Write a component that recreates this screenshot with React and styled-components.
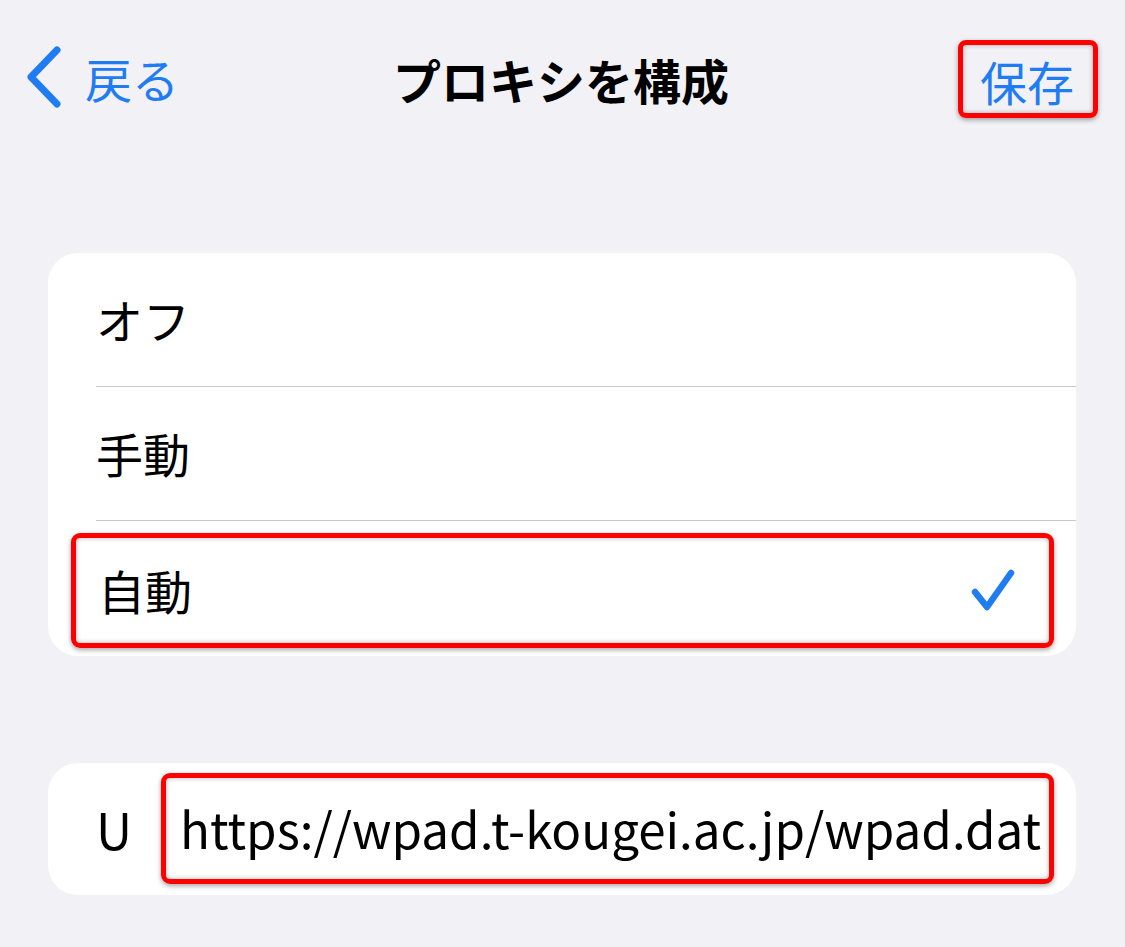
import React from 'react';
import styled, { createGlobalStyle } from 'styled-components';

const GlobalStyle = createGlobalStyle`
  body {
    margin: 0;
    background: #f2f1f6;
    font-family: "Noto Sans CJK JP", "Noto Sans", sans-serif;
    color: #000;
  }
`;

const BLUE = '#1f7cf3';

function App() {
  const options = [
    { label: 'オフ' },
    { label: '手動' },
    { label: '自動', checked: true },
  ];

  return (
    <Page>
      <GlobalStyle />
      <NavBar>
        <BackButton>
          <svg width="40" height="64" viewBox="0 0 40 64">
            <path d="M31 4 L5 31 L31 58" fill="none" stroke={BLUE} strokeWidth="7" strokeLinecap="round" strokeLinejoin="round" />
          </svg>
          <span>戻る</span>
        </BackButton>
        <Title>プロキシを構成</Title>
        <SaveSlot>
          <SaveButton>保存</SaveButton>
        </SaveSlot>
      </NavBar>

      <Card $top={134}>
        {options.map((o, i) => (
          o.checked ? (
            <Row key={i}>
              <Mark $row>
                <Label>{o.label}</Label>
                <svg width="46" height="44" viewBox="0 0 46 44">
                  <path d="M5 23 L17 38 L41 4" fill="none" stroke={BLUE} strokeWidth="6.5" strokeLinecap="round" strokeLinejoin="round" />
                </svg>
              </Mark>
            </Row>
          ) : (
            <Row key={i} $divider>
              <Label $pad>{o.label}</Label>
            </Row>
          )
        ))}
      </Card>

      <Card $top={107}>
        <UrlRow>
          <Label $pad $latin>U</Label>
          <Mark>
            <Url>https://wpad.t-kougei.ac.jp/wpad.dat</Url>
          </Mark>
        </UrlRow>
      </Card>
    </Page>
  );
}

export default App;

const Page = styled.div`
  width: 1125px;
  min-height: 947px;
  padding-bottom: 40px;
`;

const NavBar = styled.div`
  height: 84px;
  padding: 35px 27px 0 26px;
  display: grid;
  grid-template-columns: 1fr auto 1fr;
  align-items: center;
`;

const BackButton = styled.div`
  display: flex;
  align-items: center;
  gap: 19px;
  color: ${BLUE};
  font-size: 47px;
  svg { margin-top: 2px; }
`;

const Title = styled.div`
  font-size: 48px;
  font-weight: 700;
  margin: 3px 0 0 -2px;
`;

const SaveSlot = styled.div`
  display: flex;
  justify-content: flex-end;
`;

const SaveButton = styled.div`
  box-sizing: border-box;
  color: ${BLUE};
  font-size: 47px;
  height: 78px;
  line-height: 72px;
  padding: 0 19px 0 17px;
  margin-top: 3px;
  border: 5px solid #ff0000;
  border-radius: 8px;
  box-shadow: 0 2px 5px rgba(0,0,0,0.35), inset 0 0 5px rgba(0,0,0,0.3);
`;

const Card = styled.div`
  margin: ${p => p.$top}px 49px 0 48px;
  background: #fff;
  border-radius: 30px;
  overflow: hidden;
`;

const Row = styled.div`
  position: relative;
  height: 134px;
  display: flex;
  align-items: stretch;
  &:last-child { height: 135px; }
  ${p => p.$divider && `
    &::after {
      content: "";
      position: absolute;
      left: 48px;
      right: 0;
      bottom: 0;
      height: 1px;
      background: #c9c8cd;
    }
  `}
`;

const Label = styled.div`
  font-size: ${p => (p.$latin ? '50px' : '47px')};
  display: flex;
  align-items: center;
  padding-left: ${p => (p.$pad ? '48px' : '0')};
  margin-top: -3px;
`;

const Mark = styled.div`
  box-sizing: border-box;
  border: 5px solid #ff0000;
  border-radius: 9px;
  box-shadow: 0 2px 5px rgba(0,0,0,0.35), inset 0 0 5px rgba(0,0,0,0.3);
  display: flex;
  align-items: center;
  flex: 1;
  ${p => p.$row ? `
    margin: 12px 22px 8px 23px;
    padding: 0 33px 0 22px;
    justify-content: space-between;
  ` : `
    margin: 10px 22px 11px 29px;
    padding: 0 0 0 14px;
  `}
`;

const UrlRow = styled.div`
  height: 132px;
  display: flex;
  align-items: stretch;
`;

const Url = styled.div`
  font-size: 49.3px;
  white-space: nowrap;
  margin-top: -2px;
`;
